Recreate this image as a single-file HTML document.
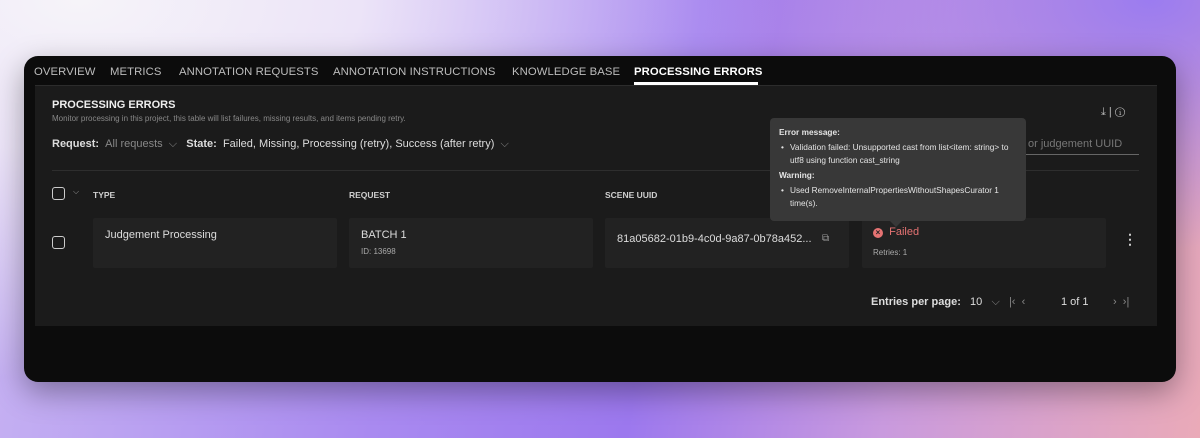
<!DOCTYPE html>
<html><head><style>
*{margin:0;padding:0;box-sizing:border-box}
body{width:1200px;height:438px;overflow:hidden;font-family:"Liberation Sans",sans-serif;position:relative;
background:radial-gradient(ellipse 700px 380px at 80px 0px,#f6f4f9 0%,#ece4f8 40%,rgba(220,205,245,0) 100%),
radial-gradient(ellipse 400px 250px at 1150px 0px,#9b7cf0 0%,rgba(155,124,240,0) 100%),
linear-gradient(100deg,#c9b6f2 0%,#a98af0 35%,#9c78ee 55%,#c99ade 75%,#eaaab8 100%);}
.win{position:absolute;left:24px;top:56px;width:1152px;height:326px;background:#0c0c0c;border-radius:14px;box-shadow:0 10px 30px rgba(0,0,0,.35)}
.t{position:absolute;white-space:nowrap}
.tab{top:10px;font-size:11.3px;color:#bdbdbd;letter-spacing:.1px}
.panel{position:absolute;left:11px;top:30px;width:1122px;height:240px;background:#1b1b1b}
.cell{position:absolute;top:132px;height:50px;width:244px;background:#222;border-radius:2px}
.cb{position:absolute;width:13px;height:13px;border:1.3px solid #ccc;border-radius:3px}
.hd{font-size:8.5px;font-weight:bold;color:#cfcfcf;top:104px}
</style></head><body>
<div class="win">
 <div class="t tab" style="left:10px">OVERVIEW</div>
 <div class="t tab" style="left:86px">METRICS</div>
 <div class="t tab" style="left:155px">ANNOTATION REQUESTS</div>
 <div class="t tab" style="left:309px">ANNOTATION INSTRUCTIONS</div>
 <div class="t tab" style="left:488px">KNOWLEDGE BASE</div>
 <div class="t tab" style="left:610px;color:#fff;font-weight:bold">PROCESSING ERRORS</div>
 <div style="position:absolute;left:610px;top:26px;width:124px;height:3px;background:#fff"></div>
 <div style="position:absolute;left:11px;top:29px;width:1122px;height:1px;background:#2c2c2c"></div>
 <div class="panel">
  <div class="t" style="left:17px;top:13px;font-size:11px;font-weight:bold;color:#eee">PROCESSING ERRORS</div>
  <div class="t" style="left:17px;top:28px;font-size:8px;color:#888">Monitor processing in this project, this table will list failures, missing results, and items pending retry.</div>
  <div class="t" style="left:17px;top:52px;font-size:11px;color:#ddd"><b>Request:</b> <span style="color:#888">&nbsp;All requests &nbsp;⌵</span> &nbsp;&nbsp;<b>State:</b>&nbsp; Failed, Missing, Processing (retry), Success (after retry) &nbsp;<span style="color:#888">⌵</span></div>
  <div class="t" style="left:993px;top:52px;font-size:11px;color:#777">or judgement UUID</div>
  <div style="position:absolute;left:965px;top:68px;width:139px;height:1px;background:#666"></div>
  <div class="t" style="left:1066px;top:20px;font-size:11px;color:#bbb">⤓ | ⓘ</div>
  <div style="position:absolute;left:17px;top:84px;width:1087px;height:1px;background:#2e2e2e"></div>
  <div class="cb" style="left:17px;top:101px"></div>
  <div class="t" style="left:38px;top:101px;font-size:8px;color:#999">⌵</div>
  <div class="t hd" style="left:58px">TYPE</div>
  <div class="t hd" style="left:314px">REQUEST</div>
  <div class="t hd" style="left:570px">SCENE UUID</div>
  <div class="cb" style="left:17px;top:150px"></div>
  <div class="cell" style="left:58px"><div class="t" style="left:12px;top:11px;font-size:11px;color:#ddd">Judgement Processing</div></div>
  <div class="cell" style="left:314px"><div class="t" style="left:12px;top:11px;font-size:11px;color:#ddd">BATCH 1</div><div class="t" style="left:12px;top:29px;font-size:8px;color:#aaa">ID: 13698</div></div>
  <div class="cell" style="left:570px"><div class="t" style="left:12px;top:15px;font-size:11px;color:#ddd">81a05682-01b9-4c0d-9a87-0b78a452...</div><div class="t" style="left:217px;top:15px;font-size:10px;color:#999">⧉</div></div>
  <div class="cell" style="left:827px"><div class="t" style="left:11px;top:8px;font-size:11px;color:#e57373"><span style="display:inline-block;width:10px;height:10px;border-radius:50%;background:#e57373;color:#222;font-size:8px;text-align:center;line-height:10px;font-weight:bold">×</span>&nbsp; Failed</div><div class="t" style="left:11px;top:30px;font-size:8px;color:#aaa">Retries: 1</div></div>
  <div class="t" style="left:1088px;top:145px;font-size:14px;color:#ccc;font-weight:bold">⋮</div>
  <div class="t" style="left:836px;top:210px;font-size:11px;color:#ddd"><b>Entries per page:</b>&nbsp;&nbsp; 10 &nbsp;&nbsp;<span style="color:#888">⌵ &nbsp; |‹ &nbsp;‹</span></div>
  <div class="t" style="left:1026px;top:210px;font-size:11px;color:#ddd">1 of 1</div>
  <div class="t" style="left:1078px;top:210px;font-size:11px;color:#888">› &nbsp;›|</div>
 </div>
 <div style="position:absolute;left:746px;top:62px;width:256px;height:103px;background:#383838;border-radius:4px;color:#e4e4e4;font-size:8.3px;padding:8px 9px;line-height:13px">
  <div style="font-weight:bold;margin-bottom:2px">Error message:</div>
  <div style="padding-left:11px;padding-right:8px;position:relative"><span style="position:absolute;left:2px">•</span>Validation failed: Unsupported cast from list&lt;item: string&gt; to utf8 using function cast_string</div>
  <div style="font-weight:bold;margin:2px 0">Warning:</div>
  <div style="padding-left:11px;position:relative"><span style="position:absolute;left:2px">•</span>Used RemoveInternalPropertiesWithoutShapesCurator 1 time(s).</div>
  <div style="position:absolute;left:120px;bottom:-6px;width:0;height:0;border-left:6px solid transparent;border-right:6px solid transparent;border-top:6px solid #383838"></div>
 </div>
</div>
</body></html>
